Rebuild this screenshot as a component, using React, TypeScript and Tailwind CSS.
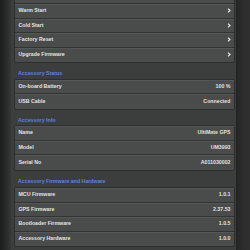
import React from "react";

type Row = { label: string; value?: string; chevron?: boolean };

const Chevron = () => (
  <svg width="4" height="5" viewBox="0 0 4 5" className="shrink-0">
    <path d="M1 0.6 L3 2.5 L1 4.4" fill="none" stroke="#e8e8e8" strokeWidth="1.2" />
  </svg>
);

const Group = ({ rows, first }: { rows: Row[]; first?: boolean }) => (
  <div className={`flex flex-col rounded-[2px] overflow-hidden border border-[#2e2e2e] bg-[#4a4b4b] ${first ? "mt-[-11.5px]" : ""}`}>
    {rows.map((r, i) => (
      <div
        key={i}
        className={`h-[14.5px] shrink-0 flex items-center justify-between pl-[3.5px] pr-[3px] ${i < rows.length - 1 ? "border-b border-[#323333]" : ""} shadow-[inset_0_1px_0_#555656]`}
      >
        <span className="text-[5.25px] font-bold text-[#e4e4e4] leading-none">{r.label}</span>
        {r.chevron ? <Chevron /> : r.value ? <span className="text-[5.25px] font-bold text-[#e0e0e0] leading-none">{r.value}</span> : null}
      </div>
    ))}
  </div>
);

const Header = ({ title }: { title: string }) => (
  <div className="h-[15.5px] shrink-0 flex items-end pl-[4px] pb-[2px]">
    <span className="text-[5.25px] font-bold text-[#5b83e0] leading-none">{title}</span>
  </div>
);

export default function App() {
  return (
    <div
      className="w-[250px] h-[250px] overflow-hidden flex bg-[#3c3d3d]"
      style={{ fontFamily: '"Liberation Sans", Arial, sans-serif' }}
    >
      <div className="w-[11px] shrink-0 bg-gradient-to-r from-[#1c1c1c] via-[#282828] to-[#363737]" />
      <div className="flex-1 flex flex-col pl-[3px] pr-[1.5px] bg-[#3c3d3d]">
        <Group
          first
          rows={[
            { label: "", chevron: false },
            { label: "Warm Start", chevron: true },
            { label: "Cold Start", chevron: true },
            { label: "Factory Reset", chevron: true },
            { label: "Upgrade Firmware", chevron: true },
          ]}
        />
        <Header title="Accessory Status" />
        <Group
          rows={[
            { label: "On-board Battery", value: "100 %" },
            { label: "USB Cable", value: "Connected" },
          ]}
        />
        <Header title="Accessory Info" />
        <Group
          rows={[
            { label: "Name", value: "UltiMate GPS" },
            { label: "Model", value: "UM3993" },
            { label: "Serial No", value: "A011030002" },
          ]}
        />
        <div className="h-[16.5px] shrink-0 flex items-end pl-[4px] pb-[3px]">
          <span className="text-[5.25px] font-bold text-[#5b83e0] leading-none">Accessory Firmware and Hardware</span>
        </div>
        <Group
          rows={[
            { label: "MCU Firmware", value: "1.0.1" },
            { label: "GPS Firmware", value: "2.37.53" },
            { label: "Bootloader Firmware", value: "1.0.5" },
            { label: "Accessory Hardware", value: "1.0.0" },
          ]}
        />
      </div>
      <div className="w-[14px] shrink-0 bg-gradient-to-r from-[#262626] via-[#2d2d2d] to-[#2f2f2f] border-l border-[#232323]" />
    </div>
  );
}
